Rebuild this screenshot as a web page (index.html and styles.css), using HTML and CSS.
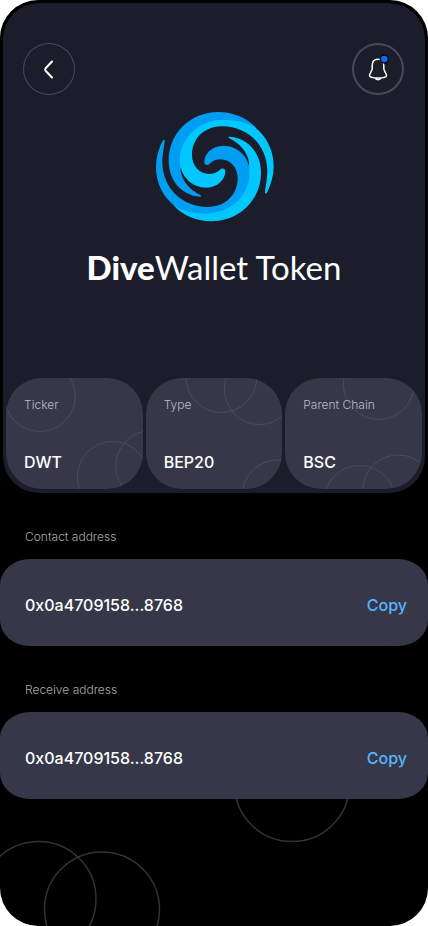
FILE: index.html
```html
<!DOCTYPE html>
<html lang="en">
<head>
<meta charset="utf-8">
<meta name="viewport" content="width=device-width, initial-scale=1">
<title>DiveWallet Token</title>
<link rel="stylesheet" href="styles.css">
</head>
<body>
<main class="screen">
  <svg class="screen-rings" viewBox="0 0 428 150" aria-hidden="true">
    <circle cx="38.500" cy="123" r="57.500"/>
    <circle cx="102" cy="133.500" r="57.500"/>
    <circle cx="292" cy="8" r="57.500"/>
  </svg>

  <section class="hero">
    <header class="topbar">
      <button class="round-button" type="button" aria-label="Back">
        <svg viewBox="0 0 52 52" aria-hidden="true"><path d="M29 18.500 L22.600 25.300 Q21.600 26.500 22.600 27.700 L29 34.500" stroke-width="2"/></svg>
      </button>
      <button class="round-button round-button-strong" type="button" aria-label="Notifications">
        <svg viewBox="0 0 52 52" aria-hidden="true">
          <path d="M26 16.200 C22.200 16.200 20.200 19 20.200 22.500 V25.500 C20.200 28.200 17.500 30.200 17.500 32.400 C17.500 34.300 21.500 34.900 26 34.900 C30.500 34.900 34.500 34.300 34.500 32.400 C34.500 30.200 31.800 28.200 31.800 25.500 V22.500 C31.800 19 29.800 16.200 26 16.200 Z M23 35.200 Q26 38.200 29 35.200" stroke-width="1.500"/>
          <circle class="alert-dot" cx="32.300" cy="16" r="4"/>
        </svg>
      </button>
    </header>

    <svg class="logo" viewBox="-3 0 420 390" aria-hidden="true">
      <defs>
        <path id="crescent" d="M165 290 C110 286 71 241 71 182 C71 100 136 36 220 36 C263 36 304 52 334 84 C300 76 270 72 238 72 C165 72 112 115 112 190 C108 202 106 207 107 214 C111 242 136 272 166 285 C170 287 170 290 165 290 Z"/>
        <path id="wave" d="M360 277 C360 283 364 281 367 276 C379 251 386 226 386 199 C386 150 364 107 325 78 C299 66 270 59 238 59 C160 59 105 115 105 183 C105 230 142 263 184 263 C220 263 241 237 241 214 C241 204 231 203 225 209 C215 218 205 222 192 222 C163 222 141 197 141 165 C141 115 179 79 230 79 C310 79 365 137 367 210 C367 240 361 261 360 277 Z"/>
      </defs>
      <g>
        <use class="deep" href="#crescent"/>
        <use class="bright" href="#wave"/>
      </g>
      <g transform="rotate(180 209.500 200)">
        <use class="bright" href="#crescent"/>
        <use class="deep" href="#wave"/>
      </g>
    </svg>

    <h1 class="title"><strong>Dive</strong>Wallet Token</h1>

    <dl class="facts">
      <div class="fact">
        <svg class="fact-rings" viewBox="0 0 137 111" aria-hidden="true"><circle cx="34" cy="18" r="35.500"/><circle cx="107" cy="99" r="35.500"/><circle cx="145.500" cy="88" r="35.500"/></svg>
        <dt>Ticker</dt>
        <dd>DWT</dd>
      </div>
      <div class="fact">
        <svg class="fact-rings" viewBox="0 0 137 111" aria-hidden="true"><circle cx="75.500" cy="-1" r="35.500"/><circle cx="114" cy="11" r="35.500"/><circle cx="132" cy="117.500" r="35.500"/></svg>
        <dt>Type</dt>
        <dd>BEP20</dd>
      </div>
      <div class="fact">
        <svg class="fact-rings" viewBox="0 0 137 111" aria-hidden="true"><circle cx="94" cy="6" r="35.500"/><circle cx="75" cy="123" r="35.500"/><circle cx="113.500" cy="112.500" r="35.500"/></svg>
        <dt>Parent Chain</dt>
        <dd>BSC</dd>
      </div>
    </dl>
  </section>

  <section class="address">
    <h2 class="address-label">Contact address</h2>
    <div class="address-card">
      <span class="address-value">0x0a4709158...8768</span>
      <button class="copy" type="button">Copy</button>
    </div>
  </section>

  <section class="address">
    <h2 class="address-label">Receive address</h2>
    <div class="address-card">
      <span class="address-value">0x0a4709158...8768</span>
      <button class="copy" type="button">Copy</button>
    </div>
  </section>
</main>
</body>
</html>
```
FILE: styles.css
```css
* {
  box-sizing: border-box;
}

body {
  margin: 0;
  background: #fff;
  color: #fff;
  font-family: Inter, "Open Sans", sans-serif;
}

button {
  padding: 0;
  border: 0;
  background: none;
  color: inherit;
  font: inherit;
  cursor: pointer;
}

.screen {
  position: relative;
  min-height: 100vh;
  padding: 3px 3px 0;
  overflow: hidden;
  border-radius: 38px;
  background: #000;
}

.screen-rings {
  position: absolute;
  left: 0;
  bottom: 0;
  width: 100%;
  fill: none;
  stroke: #333;
  stroke-width: 1.5;
}

.hero {
  display: flex;
  flex-direction: column;
  align-items: center;
  padding: 40px 3px 4px;
  border-radius: 36px;
  background: #1b1e2a;
}

.topbar {
  display: flex;
  justify-content: space-between;
  align-self: stretch;
  padding: 0 18px 0 17px;
}

.round-button {
  width: 52px;
  height: 52px;
  border-radius: 50%;
  box-shadow: inset 0 0 0 1px #484a55;
}

.round-button-strong {
  box-shadow: inset 0 0 0 2px #484a55;
}

.round-button svg {
  display: block;
  fill: none;
  stroke: #fff;
  stroke-linecap: round;
  stroke-linejoin: round;
}

.round-button .alert-dot {
  fill: #0b6bff;
  stroke: #05070d;
  stroke-width: 1.5;
}

.logo {
  width: 140px;
  height: 130px;
  margin-top: 5px;
}

.deep {
  fill: #009ef3;
}

.bright {
  fill: #00c8ff;
}

.title {
  margin: 15px 0 0;
  font-family: Lato, sans-serif;
  font-size: 33px;
  font-weight: 400;
  line-height: 44px;
}

.title strong {
  font-weight: 900;
}

.facts {
  display: grid;
  grid-template-columns: repeat(3, 1fr);
  gap: 3px;
  align-self: stretch;
  margin: 89px 0 0;
}

.fact {
  position: relative;
  display: flex;
  flex-direction: column;
  justify-content: space-between;
  min-height: 111px;
  padding: 18px 18px 16px;
  overflow: hidden;
  border-radius: 36px;
  background: #363849;
}

.fact-rings {
  position: absolute;
  inset: 0;
  width: 100%;
  height: 100%;
  fill: none;
  stroke: #4a4c5b;
}

.fact dt {
  position: relative;
  color: #bbbcc3;
  font-size: 12px;
  font-weight: 300;
  line-height: 18px;
  white-space: nowrap;
}

.fact dd {
  position: relative;
  margin: 0;
  font-size: 16px;
  font-weight: 500;
  line-height: 22px;
}

.address {
  position: relative;
  margin: 0 -3px;
  padding-top: 34px;
}

.address-label {
  margin: 0 25px 12px;
  color: #aaa;
  font-size: 12px;
  font-weight: 300;
  line-height: 20px;
}

.address-card {
  display: flex;
  align-items: center;
  justify-content: space-between;
  min-height: 87px;
  padding: 4px 21px 0 25px;
  border-radius: 30px / 26px;
  background: #363849;
}

.address-value,
.copy {
  font-size: 16px;
  font-weight: 500;
  line-height: 22px;
}

.copy {
  color: #58b5ff;
}
```
